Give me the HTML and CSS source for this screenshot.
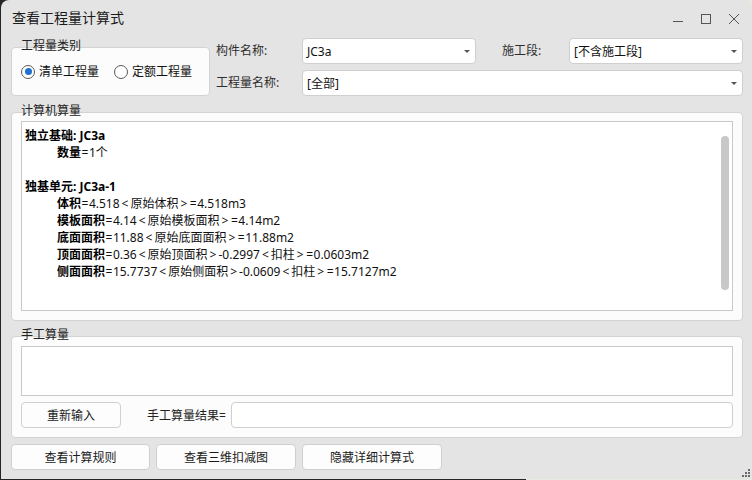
FILE: index.html
```html
<!DOCTYPE html>
<html lang="zh-CN">
<head>
<meta charset="utf-8">
<title>查看工程量计算式</title>
<link rel="stylesheet" href="styles.css">
</head>
<body>
<div class="window">
  <div class="titlebar">
    <div class="title">查看工程量计算式</div>
    <div class="controls">
      <svg class="ctl" width="12" height="12" viewBox="0 0 12 12"><path d="M1 8.5h10" stroke="#555" stroke-width="1" fill="none"/></svg>
      <svg class="ctl" width="12" height="12" viewBox="0 0 12 12"><rect x="1.5" y="1.5" width="9" height="9" stroke="#555" stroke-width="1" fill="none"/></svg>
      <svg class="ctl" width="12" height="12" viewBox="0 0 12 12"><path d="M1 1L11 11M11 1L1 11" stroke="#555" stroke-width="1" fill="none"/></svg>
    </div>
  </div>

  <div class="content">
    <div class="top-row">
      <div class="group kind">
        <span class="legend">工程量类别</span>
        <label class="radio"><span class="dot checked"></span>清单工程量</label>
        <label class="radio"><span class="dot"></span>定额工程量</label>
      </div>
      <div class="fields">
        <span class="flabel">构件名称:</span>
        <div class="combo"><span>JC3a</span><i class="arrow"></i></div>
        <span class="flabel stage">施工段:</span>
        <div class="combo"><span>[不含施工段]</span><i class="arrow"></i></div>
        <span class="flabel">工程量名称:</span>
        <div class="combo wide"><span>[全部]</span><i class="arrow"></i></div>
      </div>
    </div>

    <div class="group calc">
      <span class="legend">计算机算量</span>
      <div class="calc-area">
        <div class="line"><b>独立基础: JC3a</b></div>
        <div class="line ind"><b>数量</b><span class="eq">=</span>1个</div>
        <div class="line">&nbsp;</div>
        <div class="line"><b>独基单元: JC3a-1</b></div>
        <div class="line ind"><b>体积</b><span class="eq">=</span>4.518<span class="ab">&lt;</span>原始体积<span class="ab">&gt;</span><span class="eq">=</span>4.518m3</div>
        <div class="line ind"><b>模板面积</b><span class="eq">=</span>4.14<span class="ab">&lt;</span>原始模板面积<span class="ab">&gt;</span><span class="eq">=</span>4.14m2</div>
        <div class="line ind"><b>底面面积</b><span class="eq">=</span>11.88<span class="ab">&lt;</span>原始底面面积<span class="ab">&gt;</span><span class="eq">=</span>11.88m2</div>
        <div class="line ind"><b>顶面面积</b><span class="eq">=</span>0.36<span class="ab">&lt;</span>原始顶面积<span class="ab">&gt;</span>-0.2997<span class="ab">&lt;</span>扣柱<span class="ab">&gt;</span><span class="eq">=</span>0.0603m2</div>
        <div class="line ind"><b>侧面面积</b><span class="eq">=</span>15.7737<span class="ab">&lt;</span>原始侧面积<span class="ab">&gt;</span>-0.0609<span class="ab">&lt;</span>扣柱<span class="ab">&gt;</span><span class="eq">=</span>15.7127m2</div>
        <div class="thumb"></div>
      </div>
    </div>

    <div class="group manual">
      <span class="legend">手工算量</span>
      <div class="manual-area"></div>
      <div class="manual-row">
        <div class="btn reinput">重新输入</div>
        <span class="result-label">手工算量结果=</span>
        <div class="result-input"></div>
      </div>
    </div>

    <div class="bottom-row">
      <div class="btn big">查看计算规则</div>
      <div class="btn big">查看三维扣减图</div>
      <div class="btn big">隐藏详细计算式</div>
    </div>
  </div>
  <svg class="grip" width="10" height="10" viewBox="0 0 10 10">
    <rect x="7" y="1" width="2" height="2" fill="#6b6b6b"/>
    <rect x="4" y="4" width="2" height="2" fill="#6b6b6b"/>
    <rect x="7" y="4" width="2" height="2" fill="#6b6b6b"/>
    <rect x="1" y="7" width="2" height="2" fill="#6b6b6b"/>
    <rect x="4" y="7" width="2" height="2" fill="#6b6b6b"/>
    <rect x="7" y="7" width="2" height="2" fill="#6b6b6b"/>
  </svg>
</div>
</body>
</html>
```

FILE: styles.css
```css
* { box-sizing: border-box; }
html, body { margin: 0; padding: 0; }
body {
  width: 752px;
  height: 480px;
  background: linear-gradient(90deg, #262626 0, #262626 70%, #e4ebe0 70%);
  font-family: "Noto Sans", "Noto Sans CJK SC", sans-serif;
  font-size: 12px;
  color: #1a1a1a;
  overflow: hidden;
}
.window {
  position: relative;
  width: 751px;
  height: 479px;
  margin-left: 1px;
  background: #e4e4e4;
  border-radius: 8px 8px 0 0;
}
.titlebar {
  height: 38px;
  display: flex;
  align-items: center;
  justify-content: space-between;
  padding-left: 11px;
  padding-bottom: 2px;
}
.title { font-size: 14px; line-height: 20px; color: #1b1b1b; }
.controls { display: flex; align-items: center; gap: 16px; padding-right: 12px; padding-top: 2px; }
.ctl { display: block; }

.content { padding: 0 9px 0 10px; }

.top-row { display: flex; gap: 6px; height: 58px; }
.group {
  position: relative;
  background: #fcfcfc;
  border: 1px solid #d3d3d3;
  border-radius: 4px;
}
.legend {
  position: absolute;
  left: 9px;
  top: -10px;
  font-size: 12px;
  line-height: 16px;
  color: #222;
}
.kind {
  width: 199px;
  height: 49px;
  margin-top: 9px;
  display: flex;
  align-items: center;
  padding-left: 9px;
  gap: 15px;
}
.radio { display: flex; align-items: center; gap: 4px; color: #111; line-height: 16px; }
.dot {
  width: 14px; height: 14px;
  border-radius: 50%;
  border: 1px solid #5a5a5a;
  background: #fff;
  display: flex; align-items: center; justify-content: center;
}
.dot.checked::after {
  content: "";
  width: 7px; height: 7px;
  border-radius: 50%;
  background: #1f6fd1;
}

.fields {
  flex: 1;
  display: grid;
  grid-template-columns: 86px 174px 26px 67px 1fr;
  grid-template-rows: 26px 26px;
  row-gap: 6px;
  align-items: center;
}
.flabel { color: #2e2e2e; line-height: 16px; }
.stage { grid-column: 4; }
.combo {
  height: 26px;
  background: #fff;
  border: 1px solid #cfcfcf;
  border-radius: 4px;
  display: flex;
  align-items: center;
  justify-content: space-between;
  padding: 0 5px 0 4px;
  color: #111;
}
.combo.wide { grid-column: 2 / -1; }
.arrow {
  width: 0; height: 0;
  border-left: 3px solid transparent;
  border-right: 3px solid transparent;
  border-top: 3px solid #555;
}

.calc {
  margin-top: 16px;
  height: 209px;
  padding: 8px 9px 9px 9px;
}
.calc-area {
  position: relative;
  height: 190px;
  background: #fff;
  border: 1px solid #c9c9c9;
  padding: 5px 3px;
}
.line { line-height: 17px; white-space: nowrap; color: #111; }
.line b { font-weight: bold; color: #000; }
.ind { padding-left: 32px; }
.ab { padding: 0 2px; }
.eq { padding: 0 0.5px; }
.thumb {
  position: absolute;
  right: 3px;
  top: 14px;
  width: 8px;
  height: 154px;
  border-radius: 4px;
  background: #c8c8c8;
}

.manual {
  margin-top: 15px;
  height: 102px;
  padding: 9px 9px 9px 9px;
  display: flex;
  flex-direction: column;
  gap: 6px;
}
.manual-area {
  height: 50px;
  background: #fff;
  border: 1px solid #c9c9c9;
}
.manual-row { display: flex; align-items: center; height: 26px; }
.btn {
  height: 26px;
  background: #fdfdfd;
  border: 1px solid #d0d0d0;
  border-radius: 4px;
  display: flex;
  align-items: center;
  justify-content: center;
  color: #1a1a1a;
}
.reinput { width: 100px; }
.result-label { margin-left: 26px; color: #222; }
.result-input {
  flex: 1;
  margin-left: 5px;
  height: 26px;
  background: #fff;
  border: 1px solid #cfcfcf;
  border-radius: 4px;
}

.bottom-row { display: flex; gap: 6px; margin-top: 6px; }
.big { width: 140px; }
.big:first-child { width: 139px; }

.grip { position: absolute; right: 1px; bottom: 1px; }
```
